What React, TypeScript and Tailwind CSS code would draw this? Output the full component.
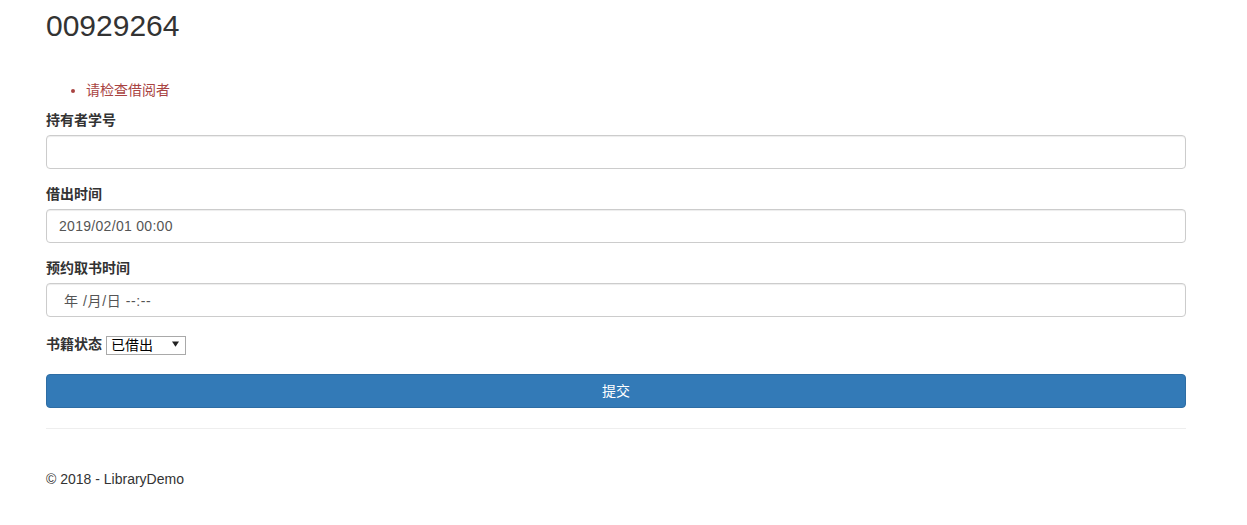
const fontStack =
  "font-['Helvetica_Neue','Liberation_Sans',Arial,'Noto_Sans_CJK_SC',sans-serif]";

function FormField({
  label,
  value,
  indent,
}: {
  label: string;
  value: string;
  indent?: boolean;
}) {
  return (
    <div className="mb-[15px]">
      <label className="mb-[5px] block font-bold">{label}</label>
      <input
        type="text"
        readOnly
        value={value}
        className={`block h-[34px] w-full rounded-[4px] border border-[#ccc] bg-white py-[6px] text-[14px] leading-[20px] text-[#555] shadow-[inset_0_1px_1px_rgba(0,0,0,0.075)] outline-none ${
          indent ? "pl-[17px] pr-[12px] tracking-[0.6px]" : "px-[12px] tracking-[0.3px]"
        }`}
      />
    </div>
  );
}

export default function App() {
  return (
    <div
      className={`${fontStack} ml-[46px] w-[1140px] pb-[20px] text-[14px] leading-[20px] text-[#333]`}
    >
      <h2 className="pt-[9px] text-[30px] font-normal leading-[33px]">
        00929264
      </h2>

      <ul className="mb-[10px] mt-[38px] list-disc pl-[40px] text-[#a94442]">
        <li>请检查借阅者</li>
      </ul>

      <form>
        <FormField label="持有者学号" value="" />
        <FormField label="借出时间" value="2019/02/01 00:00" />
        <FormField label="预约取书时间" value="年 /月/日 --:--" indent />

        <div className="mb-[18px] flex h-[24px] items-center gap-[4px]">
          <label className="font-bold">书籍状态</label>
          <div className="relative h-[19px] w-[80px]">
            <select
              defaultValue="borrowed"
              className="h-full w-full appearance-none border border-[#a9a9a9] bg-white pl-[4px] text-[14px] leading-[17px] text-black outline-none"
            >
              <option value="borrowed">已借出</option>
              <option value="free">可借阅</option>
            </select>
            <svg
              viewBox="0 0 8 6"
              className="pointer-events-none absolute right-[7px] top-[6px] h-[6px] w-[7px]"
            >
              <path d="M0 0h8L4 6z" fill="#222" />
            </svg>
          </div>
        </div>

        <button
          type="button"
          className="block h-[34px] w-full rounded-[4px] border border-[#2e6da4] bg-[#337ab7] text-[14px] leading-[20px] text-white"
        >
          提交
        </button>
      </form>

      <hr className="mt-[20px] border-0 border-t border-[#eee]" />

      <footer>
        <p className="mt-[40px]">© 2018 - LibraryDemo</p>
      </footer>
    </div>
  );
}
